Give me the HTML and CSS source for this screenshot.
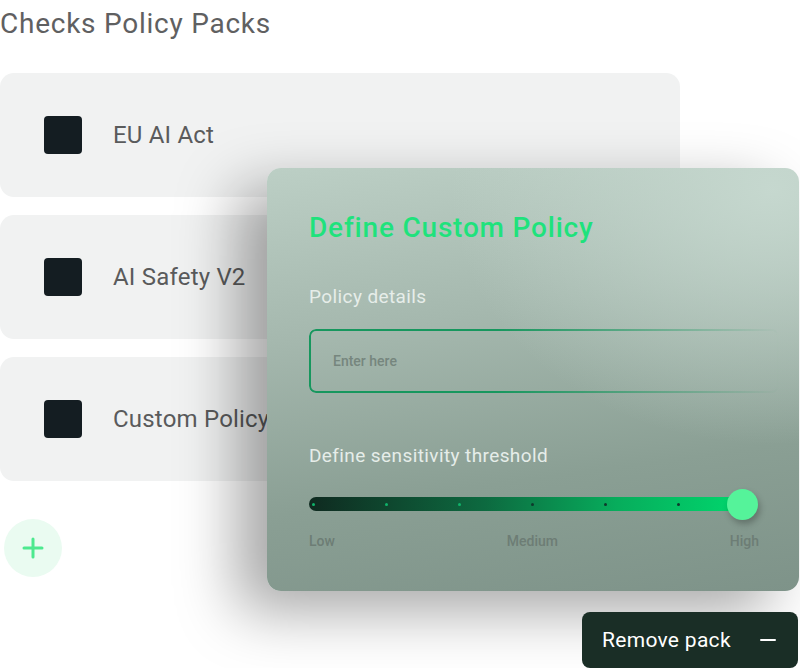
FILE: index.html
```html
<!DOCTYPE html>
<html lang="en">
<head>
    <meta charset="UTF-8">
    <meta name="viewport" content="width=device-width, initial-scale=1.0">
    <title>Checks Policy Packs</title>
    <link rel="stylesheet" href="styles.css">
</head>
<body>
    <main class="page">
        <h1 class="page-title">Checks Policy Packs</h1>

        <ul class="pack-list">
            <li class="pack-card">
                <span class="pack-check"></span>
                <span class="pack-name">EU AI Act</span>
            </li>
            <li class="pack-card">
                <span class="pack-check"></span>
                <span class="pack-name">AI Safety V2</span>
            </li>
            <li class="pack-card">
                <span class="pack-check"></span>
                <span class="pack-name">Custom Policy</span>
            </li>
        </ul>

        <button class="add-btn" aria-label="Add pack">
            <svg width="22" height="22" viewBox="0 0 22 22">
                <path d="M11 2v18M2 11h18" stroke="#4de98f" stroke-width="3" stroke-linecap="round" fill="none"/>
            </svg>
        </button>
    </main>

    <!-- Custom policy dialog -->
    <section class="policy-modal">
        <h2 class="modal-title">Define Custom Policy</h2>

        <label class="field-label" for="policyDetails">Policy details</label>
        <div class="text-field">
            <input id="policyDetails" type="text" placeholder="Enter here">
        </div>

        <p class="field-label threshold-label">Define sensitivity threshold</p>
        <div class="slider">
            <div class="slider-track">
                <span class="tick"></span>
                <span class="tick"></span>
                <span class="tick"></span>
                <span class="tick dark"></span>
                <span class="tick dark"></span>
                <span class="tick dark"></span>
            </div>
            <span class="slider-thumb"></span>
        </div>
        <div class="slider-labels">
            <span>Low</span>
            <span>Medium</span>
            <span>High</span>
        </div>
    </section>

    <button class="remove-btn">
        <span>Remove pack</span>
        <span class="minus"></span>
    </button>
</body>
</html>
```

FILE: styles.css
```css
/* Reset some default styles */
body, h1, h2, p, ul, li {
    margin: 0;
    padding: 0;
}

body {
    font-family: Roboto, "Open Sans", sans-serif;
    background-color: #ffffff;
    color: #555;
    width: 800px;
    height: 668px;
    overflow: hidden;
    position: relative;
}

.page {
    width: 680px;
}

.page-title {
    font-size: 28px;
    font-weight: 400;
    color: #5f6061;
    line-height: 48px;
    letter-spacing: 0.75px;
}

.pack-list {
    list-style: none;
    margin-top: 25px;
    display: flex;
    flex-direction: column;
    gap: 18px;
}

.pack-card {
    height: 124px;
    background-color: #f1f2f2;
    border-radius: 14px;
    display: flex;
    align-items: center;
    padding-left: 44px;
    gap: 31px;
}

.pack-check {
    width: 38px;
    height: 38px;
    background-color: #141d22;
    border-radius: 4px;
}

.pack-name {
    font-size: 24px;
    color: #5a5b5c;
    letter-spacing: 0.2px;
}

.add-btn {
    margin: 38px 0 0 4px;
    width: 58px;
    height: 58px;
    border: none;
    border-radius: 50%;
    background-color: #eafbf1;
    display: flex;
    align-items: center;
    justify-content: center;
    padding: 0;
}

.policy-modal {
    position: absolute;
    left: 267px;
    top: 168px;
    width: 532px;
    height: 423px;
    box-sizing: border-box;
    padding: 42px 0 0 42px;
    border-radius: 14px;
    background:
        radial-gradient(ellipse at 95% 5%, rgba(200, 218, 209, 0.9), rgba(200, 218, 209, 0) 45%),
        linear-gradient(172deg, #bccfc5 0%, #a5b8ae 35%, #8a9f94 70%, #7e9389 100%);
    box-shadow: -30px 20px 60px rgba(0, 0, 0, 0.35);
}

.modal-title {
    font-size: 28px;
    font-weight: 500;
    color: #1fe27c;
    line-height: 36px;
    letter-spacing: 0.8px;
}

.field-label {
    display: block;
    font-size: 19px;
    color: #e6ede9;
    margin-top: 39px;
    letter-spacing: 0.4px;
}

.text-field {
    position: relative;
    margin-top: 21px;
    width: 470px;
    height: 64px;
}

.text-field::before {
    content: "";
    position: absolute;
    inset: 0;
    border: 2px solid #17975e;
    border-radius: 7px;
    -webkit-mask-image: linear-gradient(90deg, #000 40%, rgba(0, 0, 0, 0) 100%);
    mask-image: linear-gradient(90deg, #000 40%, rgba(0, 0, 0, 0) 100%);
}

.text-field input {
    width: 100%;
    height: 100%;
    box-sizing: border-box;
    border: none;
    background: transparent;
    padding: 0 24px;
    font-family: inherit;
    font-size: 14px;
    font-weight: 500;
    outline: none;
}

.text-field input::placeholder {
    color: #76867e;
}

.threshold-label {
    margin-top: 51px;
}

.slider {
    position: relative;
    margin-top: 22px;
    width: 450px;
    height: 30px;
    display: flex;
    align-items: center;
}

.slider-track {
    width: 440px;
    height: 14px;
    border-radius: 7px;
    background: linear-gradient(90deg, #0f2a20 0%, #0d6a40 40%, #07ad5c 70%, #00d96e 100%);
    display: flex;
    align-items: center;
    gap: 70px;
    padding-left: 3px;
    box-sizing: border-box;
}

.tick {
    width: 3px;
    height: 3px;
    border-radius: 50%;
    background-color: #0fb36a;
}

.tick.dark {
    background-color: #0e3a2c;
}

.slider-thumb {
    position: absolute;
    left: 418px;
    top: 0;
    width: 31px;
    height: 31px;
    border-radius: 50%;
    background-color: #55f39a;
    box-shadow: 2px 4px 6px rgba(0, 0, 0, 0.25);
}

.slider-labels {
    display: flex;
    justify-content: space-between;
    width: 450px;
    margin-top: 14px;
    font-size: 14px;
    font-weight: 500;
    color: #6d7d75;
}

.remove-btn {
    position: absolute;
    left: 582px;
    top: 612px;
    width: 216px;
    height: 56px;
    border: none;
    border-radius: 8px;
    background-color: #1a2e26;
    color: #ffffff;
    font-family: inherit;
    font-size: 21px;
    letter-spacing: 0.3px;
    display: flex;
    align-items: center;
    justify-content: space-between;
    padding: 0 22px 0 20px;
}

.minus {
    width: 16px;
    height: 2px;
    background-color: #ffffff;
    border-radius: 1px;
}
```
